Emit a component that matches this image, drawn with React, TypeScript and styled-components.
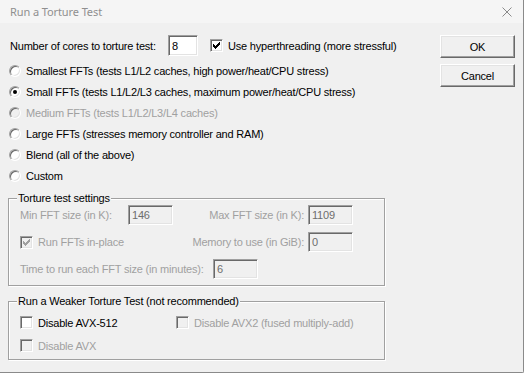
import React from 'react';
import styled, { createGlobalStyle } from 'styled-components';

const GlobalStyle = createGlobalStyle`
  html, body {
    margin: 0;
    padding: 0;
    background: #fff;
  }
  body {
    font-family: "Liberation Sans", Arial, sans-serif;
    font-size: 11px;
    letter-spacing: -0.2px;
    color: #000;
  }
`;

const Window = styled.div`
  width: 524px;
  height: 373px;
  box-sizing: border-box;
  background: #f0f0f0;
  border-right: 1px solid #8a8a8a;
  border-bottom: 1px solid #8a8a8a;
  border-bottom-right-radius: 2px;
  display: flex;
  flex-direction: column;
`;

const TitleBar = styled.div`
  height: 23px;
  display: flex;
  align-items: center;
  justify-content: space-between;
  padding: 0 11px 0 10px;
  background: #f5f5f5;
`;

const Title = styled.span`
  font-family: "Noto Sans", "Open Sans", sans-serif;
  font-size: 11px;
  letter-spacing: -0.1px;
  color: #8f8f8f;
`;

const Body = styled.div`
  flex: 1;
  display: flex;
  padding: 12px 8px 0 8px;
`;

const Main = styled.div`
  width: 377px;
  display: flex;
  flex-direction: column;
`;

const Side = styled.div`
  margin-left: auto;
  width: 75px;
  display: flex;
  flex-direction: column;
  gap: 6px;
`;

const Button = styled.button`
  width: 75px;
  height: 23px;
  box-sizing: border-box;
  padding: 0;
  background: #f0f0f0;
  border: 1px solid;
  border-color: #fff #696969 #696969 #fff;
  box-shadow: inset -1px -1px 0 #a0a0a0, inset 1px 1px 0 #e3e3e3;
  font-family: "Liberation Sans", Arial, sans-serif;
  font-size: 11px;
  letter-spacing: -0.2px;
  color: #000;
`;

const TopRow = styled.div`
  height: 21px;
  display: flex;
  align-items: center;
  padding-left: 2px;
`;

const Label = styled.span<{ $disabled?: boolean; $width?: number; $align?: string }>`
  display: inline-block;
  flex: none;
  width: ${(p) => (p.$width ? `${p.$width}px` : 'auto')};
  text-align: ${(p) => p.$align || 'left'};
  padding-right: ${(p) => (p.$align === 'right' ? '4px' : '0')};
  box-sizing: border-box;
  color: ${(p) => (p.$disabled ? '#a0a0a0' : '#000')};
  white-space: nowrap;
`;

const EditBox = styled.div<{ $width: number; $height?: number; $disabled?: boolean }>`
  flex: none;
  width: ${(p) => p.$width}px;
  height: ${(p) => p.$height || 20}px;
  box-sizing: border-box;
  border: 1px solid;
  border-color: #a0a0a0 #fff #fff #a0a0a0;
  box-shadow: inset 1px 1px 0 #696969, inset -1px -1px 0 #e3e3e3;
  background: ${(p) => (p.$disabled ? '#f0f0f0' : '#fff')};
  color: ${(p) => (p.$disabled ? '#6d6d6d' : '#000')};
  padding-left: 3px;
  display: flex;
  align-items: center;
`;

const Choice = styled.label<{ $disabled?: boolean; $width?: number; $gap?: number }>`
  flex: none;
  display: flex;
  align-items: center;
  gap: 5px;
  width: ${(p) => (p.$width ? `${p.$width}px` : 'auto')};
  margin-left: ${(p) => p.$gap || 0}px;
  color: ${(p) => (p.$disabled ? '#a0a0a0' : '#000')};
  white-space: nowrap;
`;

const Box = styled.span<{ $disabled?: boolean }>`
  flex: none;
  width: 13px;
  height: 13px;
  box-sizing: border-box;
  border: 1px solid;
  border-color: #a0a0a0 #fff #fff #a0a0a0;
  box-shadow: inset 1px 1px 0 #696969, inset -1px -1px 0 #e3e3e3;
  background: ${(p) => (p.$disabled ? '#f0f0f0' : '#fff')};
  display: flex;
  align-items: center;
  justify-content: center;
`;

const RadioCircle = styled.span<{ $disabled?: boolean; $checked?: boolean }>`
  flex: none;
  width: 12px;
  height: 12px;
  box-sizing: border-box;
  border-radius: 50%;
  border: 1px solid;
  border-color: #a0a0a0 #fff #fff #a0a0a0;
  box-shadow: inset 1px 1px 0 #696969, inset -1px -1px 0 #e3e3e3;
  background: ${(p) => (p.$disabled ? '#f0f0f0' : '#fff')};
  display: flex;
  align-items: center;
  justify-content: center;

  &::after {
    content: '';
    display: ${(p) => (p.$checked ? 'block' : 'none')};
    width: 4px;
    height: 4px;
    border-radius: 50%;
    background: #000;
  }
`;

const RadioRow = styled.div`
  height: 21px;
  display: flex;
  align-items: center;
  padding-left: 1px;
`;

const Radios = styled.div`
  margin-top: 4px;
  display: flex;
  flex-direction: column;
`;

const Group = styled.fieldset<{ $top: number }>`
  margin: ${(p) => p.$top}px 0 0;
  padding: 0;
  min-width: 0;
  width: 377px;
  box-sizing: border-box;
  border: 1px solid #a0a0a0;
  box-shadow: inset 1px 1px 0 #fff, 1px 1px 0 #fff;
`;

const Legend = styled.legend`
  margin-left: 8px;
  padding: 0 1px;
  line-height: 14px;
  background: #f0f0f0;
  color: #000;
`;

const GroupBody = styled.div<{ $pad: string; $gap: number }>`
  padding: ${(p) => p.$pad};
  display: flex;
  flex-direction: column;
  gap: ${(p) => p.$gap}px;
`;

const FieldRow = styled.div<{ $height: number }>`
  height: ${(p) => p.$height}px;
  display: flex;
  align-items: center;
`;

const CheckMark = ({ color }: { color: string }) => (
  <svg width="7" height="7" viewBox="0 0 7 7" shapeRendering="crispEdges">
    <path d="M0 2h1v1h1v1h1V3h1V2h1V1h1V0h1v3H6v1H5v1H4v1H3v1H2V6H1V5H0z" fill={color} />
  </svg>
);

const CheckBox = ({
  label,
  checked,
  disabled,
  width,
  gap,
}: {
  label: string;
  checked?: boolean;
  disabled?: boolean;
  width?: number;
  gap?: number;
}) => (
  <Choice $disabled={disabled} $width={width} $gap={gap}>
    <Box $disabled={disabled}>{checked && <CheckMark color={disabled ? '#a0a0a0' : '#000'} />}</Box>
    {label}
  </Choice>
);

const Radio = ({ label, checked, disabled }: { label: string; checked?: boolean; disabled?: boolean }) => (
  <RadioRow>
    <Choice $disabled={disabled}>
      <RadioCircle $checked={checked} $disabled={disabled} />
      {label}
    </Choice>
  </RadioRow>
);

const CloseIcon = () => (
  <svg width="10" height="10" viewBox="0 0 10 10">
    <path d="M0.5 0.5L9.5 9.5M9.5 0.5L0.5 9.5" stroke="#8a8a8a" strokeWidth="1" />
  </svg>
);

const sizes = [
  { label: 'Smallest FFTs (tests L1/L2 caches, high power/heat/CPU stress)' },
  { label: 'Small FFTs (tests L1/L2/L3 caches, maximum power/heat/CPU stress)', checked: true },
  { label: 'Medium FFTs (tests L1/L2/L3/L4 caches)', disabled: true },
  { label: 'Large FFTs (stresses memory controller and RAM)' },
  { label: 'Blend (all of the above)' },
  { label: 'Custom' },
];

export default function App() {
  return (
    <>
      <GlobalStyle />
      <Window>
        <TitleBar>
          <Title>Run a Torture Test</Title>
          <CloseIcon />
        </TitleBar>
        <Body>
          <Main>
            <TopRow>
              <Label $width={158}>Number of cores to torture test:</Label>
              <EditBox $width={30} $height={21}>8</EditBox>
              <CheckBox label="Use hyperthreading (more stressful)" checked gap={12} />
            </TopRow>

            <Radios>
              {sizes.map((s) => (
                <Radio key={s.label} label={s.label} checked={s.checked} disabled={s.disabled} />
              ))}
            </Radios>

            <Group $top={5}>
              <Legend>Torture test settings</Legend>
              <GroupBody $pad="0 0 6px 11px" $gap={7}>
                <FieldRow $height={20}>
                  <Label $disabled $width={108}>Min FFT size (in K):</Label>
                  <EditBox $width={45} $disabled>146</EditBox>
                  <Label $disabled $width={135} $align="right">Max FFT size (in K):</Label>
                  <EditBox $width={45} $disabled>1109</EditBox>
                </FieldRow>
                <FieldRow $height={20}>
                  <CheckBox label="Run FFTs in-place" checked disabled width={153} />
                  <Label $disabled $width={135} $align="right">Memory to use (in GiB):</Label>
                  <EditBox $width={45} $disabled>0</EditBox>
                </FieldRow>
                <FieldRow $height={20}>
                  <Label $disabled $width={193}>Time to run each FFT size (in minutes):</Label>
                  <EditBox $width={45} $disabled>6</EditBox>
                </FieldRow>
              </GroupBody>
            </Group>

            <Group $top={8}>
              <Legend>Run a Weaker Torture Test (not recommended)</Legend>
              <GroupBody $pad="6px 0 5px 11px" $gap={6}>
                <FieldRow $height={17}>
                  <CheckBox label="Disable AVX-512" width={156} />
                  <CheckBox label="Disable AVX2 (fused multiply-add)" disabled />
                </FieldRow>
                <FieldRow $height={17}>
                  <CheckBox label="Disable AVX" disabled />
                </FieldRow>
              </GroupBody>
            </Group>
          </Main>

          <Side>
            <Button>OK</Button>
            <Button>Cancel</Button>
          </Side>
        </Body>
      </Window>
    </>
  );
}
